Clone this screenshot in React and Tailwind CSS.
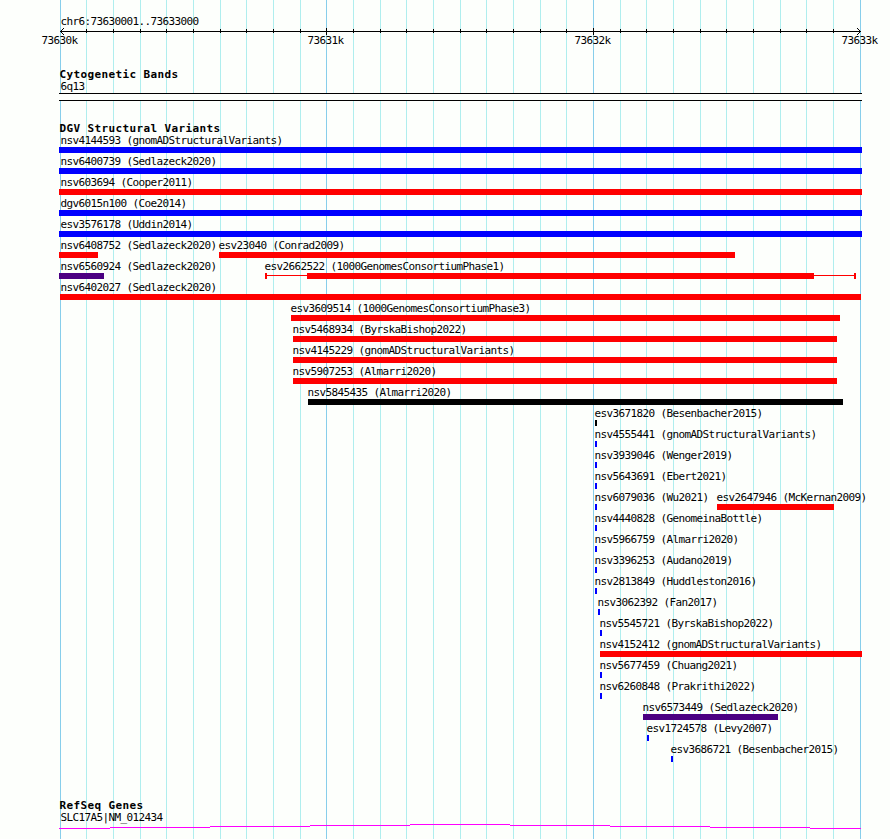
const RED = 'bg-[#ff0000]';
const BLUE = 'bg-[#0000ff]';
const BLACK = 'bg-black';
const INDIGO = 'bg-[#4b0082]';

// One entry per row; each feature is [label, label x, bar start, bar end, colour].
const VARIANTS = [
  [['nsv4144593 (gnomADStructuralVariants)', 60, 59, 862, BLUE]],
  [['nsv6400739 (Sedlazeck2020)', 60, 59, 862, BLUE]],
  [['nsv603694 (Cooper2011)', 60, 59, 862, RED]],
  [['dgv6015n100 (Coe2014)', 60, 59, 862, BLUE]],
  [['esv3576178 (Uddin2014)', 60, 59, 862, BLUE]],
  [
    ['nsv6408752 (Sedlazeck2020)', 60, 59, 98, RED],
    ['esv23040 (Conrad2009)', 218, 219, 735, RED],
  ],
  [
    ['nsv6560924 (Sedlazeck2020)', 60, 59, 104, INDIGO],
    ['esv2662522 (1000GenomesConsortiumPhase1)', 264, 307, 814, RED, [265, 856]],
  ],
  [['nsv6402027 (Sedlazeck2020)', 60, 60, 861, RED]],
  [['esv3609514 (1000GenomesConsortiumPhase3)', 290, 291, 840, RED]],
  [['nsv5468934 (ByrskaBishop2022)', 292, 293, 837, RED]],
  [['nsv4145229 (gnomADStructuralVariants)', 292, 293, 837, RED]],
  [['nsv5907253 (Almarri2020)', 292, 293, 837, RED]],
  [['nsv5845435 (Almarri2020)', 307, 308, 843, BLACK]],
  [['esv3671820 (Besenbacher2015)', 594, 595, 597, BLACK]],
  [['nsv4555441 (gnomADStructuralVariants)', 594, 595, 597, BLUE]],
  [['nsv3939046 (Wenger2019)', 594, 595, 597, BLUE]],
  [['nsv5643691 (Ebert2021)', 594, 595, 597, BLUE]],
  [
    ['nsv6079036 (Wu2021)', 594, 595, 597, BLUE],
    ['esv2647946 (McKernan2009)', 716, 717, 834, RED],
  ],
  [['nsv4440828 (GenomeinaBottle)', 594, 595, 597, BLUE]],
  [['nsv5966759 (Almarri2020)', 594, 595, 597, BLUE]],
  [['nsv3396253 (Audano2019)', 594, 595, 597, BLUE]],
  [['nsv2813849 (Huddleston2016)', 594, 595, 597, BLUE]],
  [['nsv3062392 (Fan2017)', 597, 598, 600, BLUE]],
  [['nsv5545721 (ByrskaBishop2022)', 599, 600, 602, BLUE]],
  [['nsv4152412 (gnomADStructuralVariants)', 599, 600, 862, RED]],
  [['nsv5677459 (Chuang2021)', 599, 600, 602, BLUE]],
  [['nsv6260848 (Prakrithi2022)', 599, 600, 602, BLUE]],
  [['nsv6573449 (Sedlazeck2020)', 642, 643, 778, INDIGO]],
  [['esv1724578 (Levy2007)', 646, 647, 649, BLUE]],
  [['esv3686721 (Besenbacher2015)', 670, 671, 673, BLUE]],
];

const TICKS = Array.from({ length: 31 }, (_, i) => Math.floor(60 + (i * 80) / 3));

function Label({ x, children }) {
  return (
    <div
      className="col-start-1 row-start-1 h-[12px] whitespace-pre pl-[0.4px] text-[11px] leading-[12px] tracking-[-0.622px]"
      style={{ marginLeft: x }}
    >
      {children}
    </div>
  );
}

function Title({ children }) {
  return (
    <h2 className="ml-[59.4px] h-[13px] whitespace-pre text-[11px] font-bold leading-[13px] tracking-[0.378px]">
      {children}
    </h2>
  );
}

function Grid() {
  return (
    <div className="absolute inset-0">
      {TICKS.map((x, i) => (
        <div
          key={x}
          className={'absolute inset-y-0 w-px ' + (i % 10 ? 'bg-[#afeeee]' : 'bg-[#87ceeb]')}
          style={{ left: x }}
        />
      ))}
    </div>
  );
}

function Axis() {
  return (
    <svg className="block h-[7px] w-full" viewBox="0 0 890 7" shapeRendering="crispEdges">
      <rect x="60" y="3" width="801" height="1" />
      {TICKS.slice(1, -1).map((x, i) => (
        <rect
          key={x}
          x={x}
          y={(i + 1) % 10 ? 1 : 0}
          width="1"
          height={(i + 1) % 10 ? 4 : 7}
        />
      ))}
      {[1, 2, 3].map((d) => (
        <g key={d}>
          <rect x={60 + d} y={3 - d} width="1" height="1" />
          <rect x={60 + d} y={3 + d} width="1" height="1" />
          <rect x={860 - d} y={3 - d} width="1" height="1" />
          <rect x={860 - d} y={3 + d} width="1" height="1" />
        </g>
      ))}
    </svg>
  );
}

function Feature({ data }) {
  const [label, x, start, end, colour, range] = data;
  return (
    <div className="col-start-1 row-start-1">
      <Label x={x}>{label}</Label>
      {range ? (
        <div
          className="flex h-[6px] items-stretch"
          style={{ marginLeft: range[0], width: range[1] - range[0] }}
        >
          <div className="w-[2px] bg-[#ff0000]" />
          <div className="mt-[2px] h-px bg-[#ff0000]" style={{ width: start - range[0] - 2 }} />
          <div className={colour} style={{ width: end - start }} />
          <div className="mt-[2px] h-px flex-1 bg-[#ff0000]" />
          <div className="w-[2px] bg-[#ff0000]" />
        </div>
      ) : (
        <div className={'h-[6px] ' + colour} style={{ marginLeft: start, width: end - start }} />
      )}
    </div>
  );
}

export default function App() {
  return (
    <div className="relative h-[839px] w-[890px] overflow-hidden bg-[#fdfffc] font-['DejaVu_Sans_Mono',monospace] text-black">
      <Grid />
      <main className="relative flex flex-col">
        <section className="pt-[16px]">
          <Label x={60}>chr6:73630001..73633000</Label>
          <Axis />
          <div className="grid">
            <Label x={41}>73630k</Label>
            <Label x={307}>73631k</Label>
            <Label x={574}>73632k</Label>
            <Label x={841}>73633k</Label>
          </div>
        </section>

        <section className="mt-[21px]">
          <Title>Cytogenetic Bands</Title>
          <Label x={60}>6q13</Label>
          <div className="ml-[59px] h-[8px] w-[803px] border-y border-black bg-[#fdfffc]" />
        </section>

        <section className="mt-[21px]">
          <Title>DGV Structural Variants</Title>
          {VARIANTS.map((row) => (
            <div key={row[0][0]} className="grid h-[21px]">
              {row.map((f) => (
                <Feature key={f[0]} data={f} />
              ))}
            </div>
          ))}
        </section>

        <section className="mt-[34px]">
          <Title>RefSeq Genes</Title>
          <Label x={60}>SLC17A5|NM_012434</Label>
          <svg className="block h-[6px] w-full" viewBox="0 0 890 6" fill="#ff00ff" shapeRendering="crispEdges">
            <rect x="59" y="4" width="51" height="1" />
            <rect x="110" y="3" width="100" height="1" />
            <rect x="210" y="2" width="100" height="1" />
            <rect x="310" y="1" width="100" height="1" />
            <rect x="410" y="0" width="100" height="1" />
            <rect x="510" y="1" width="100" height="1" />
            <rect x="610" y="2" width="100" height="1" />
            <rect x="710" y="3" width="100" height="1" />
            <rect x="810" y="4" width="51" height="1" />
          </svg>
        </section>
      </main>
    </div>
  );
}
